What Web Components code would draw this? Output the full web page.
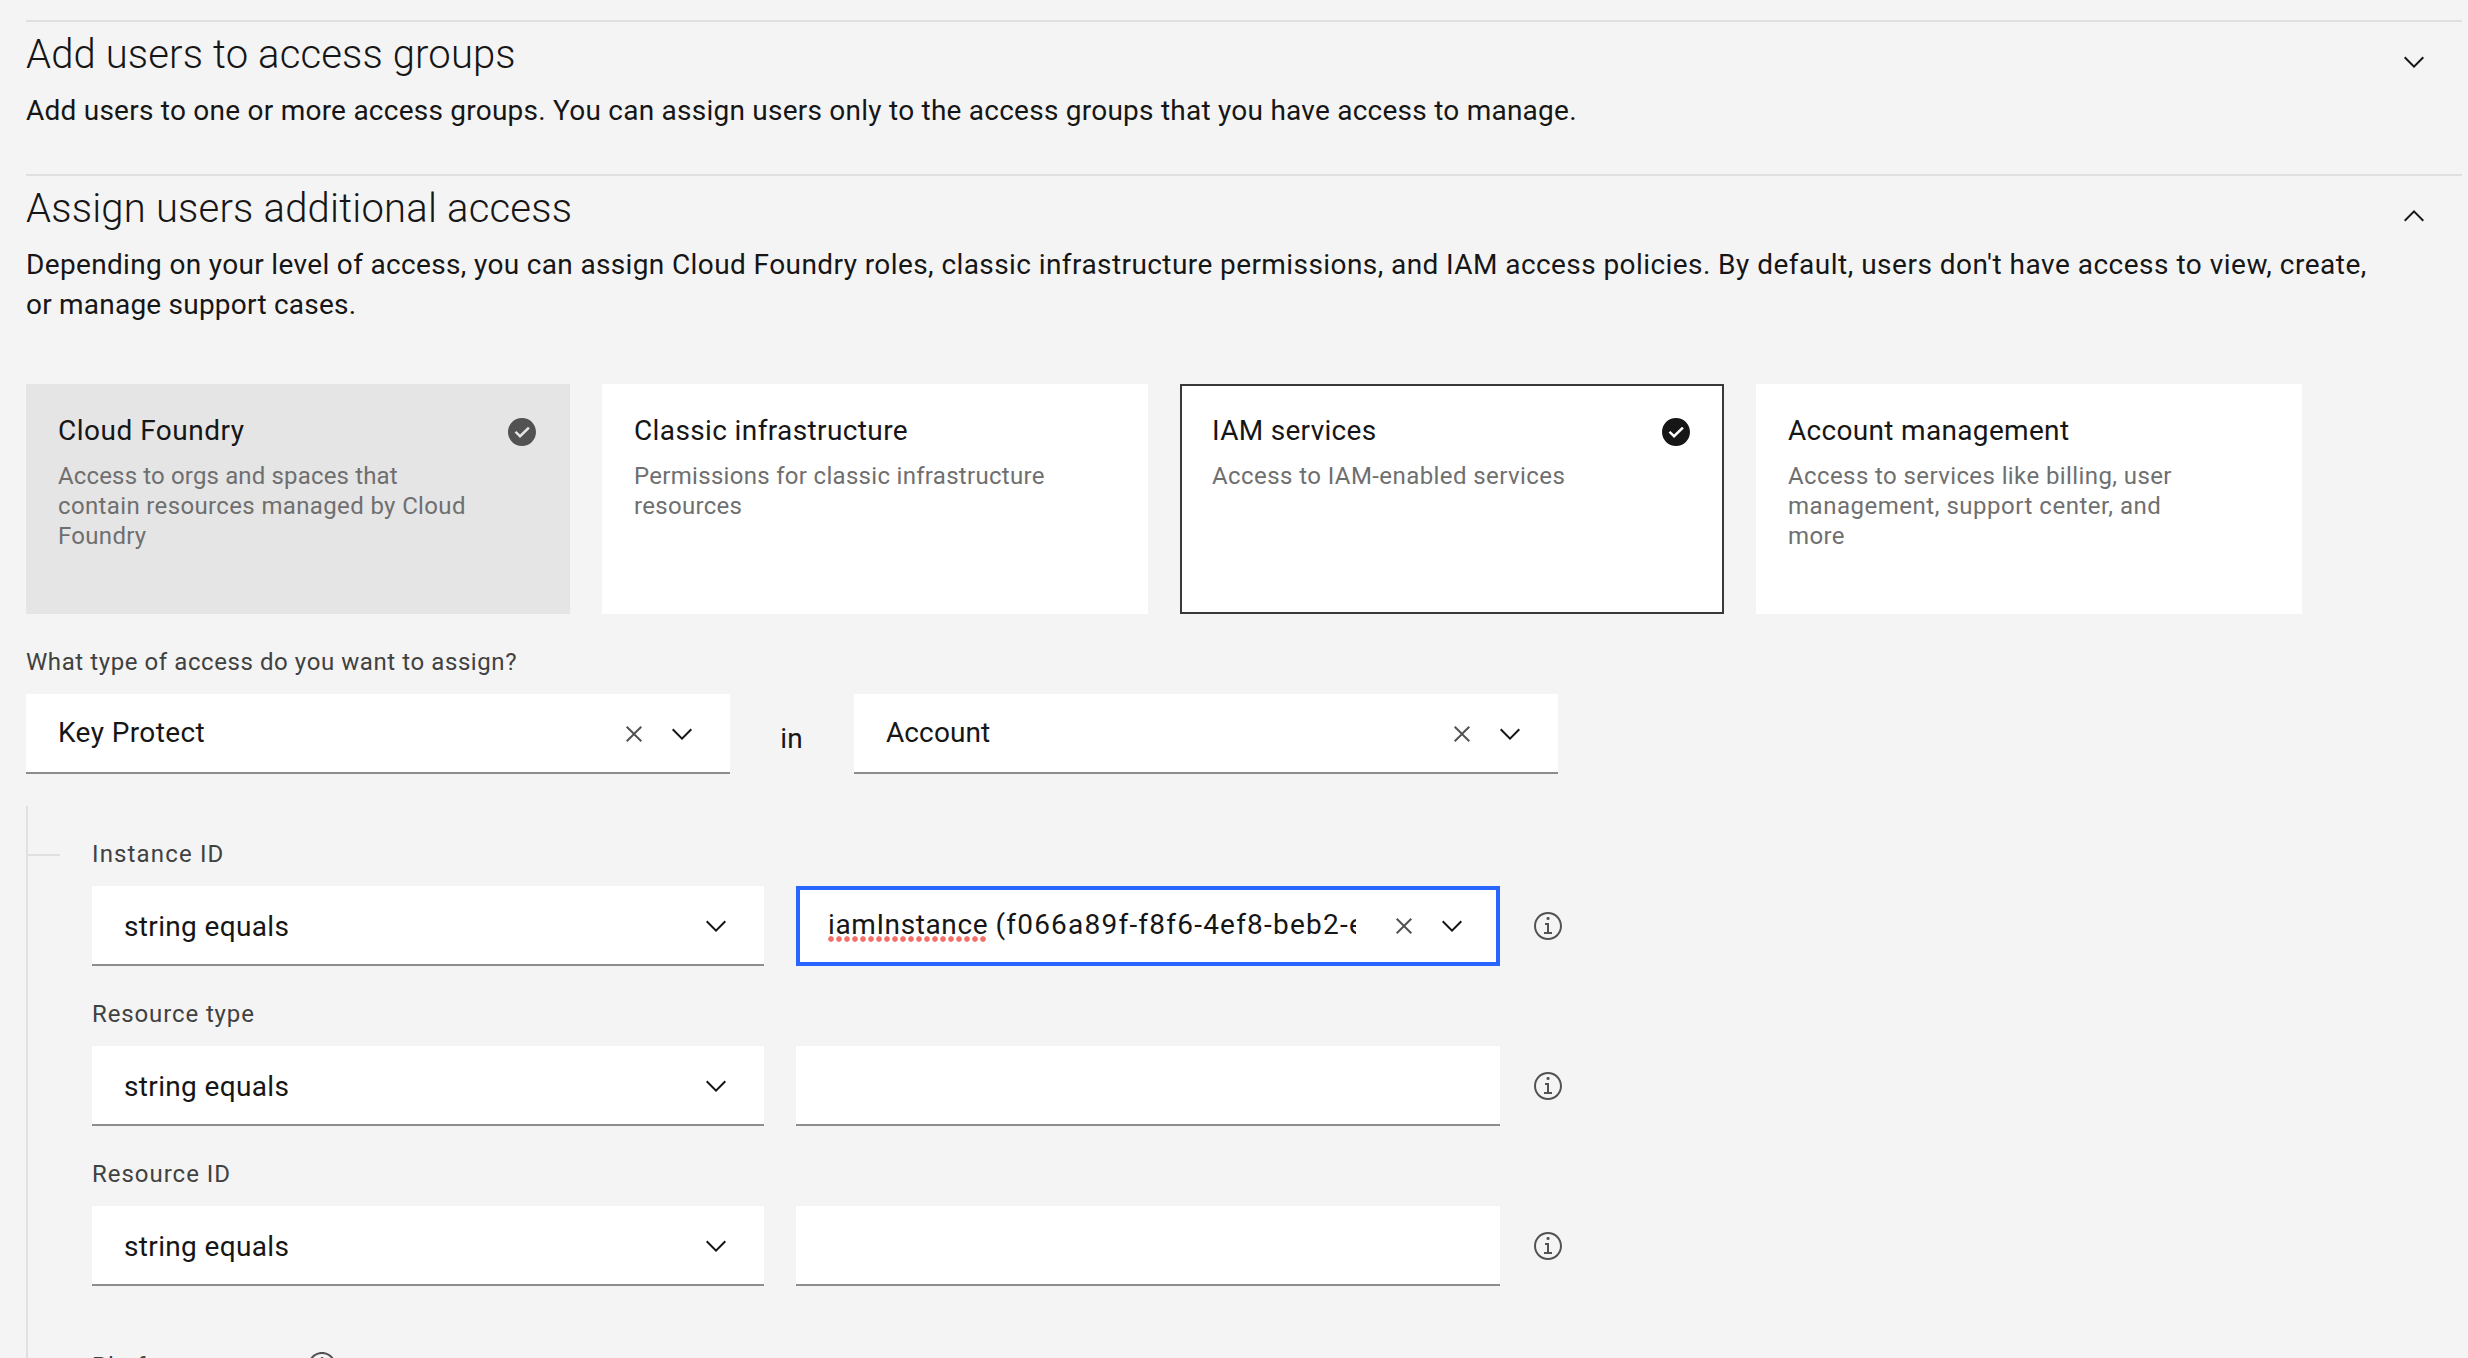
<!DOCTYPE html>
<html lang="en">
<head>
<meta charset="utf-8">
<title>Assign access</title>
<style>
html,body{margin:0;height:1358px;overflow:hidden;background:#f4f4f4}
body{font-family:Roboto,"Liberation Sans",sans-serif;font-size:28px;line-height:40px;color:#161616}
main{padding:20px 6px 0 26px}
.cards{display:grid;grid-template-columns:544px 546px 544px 546px;gap:32px;margin-top:59px}
.scope{display:flex}
.scope span{width:123px;margin-right:1px;text-align:center;padding-top:25px}
</style>
</head>
<body>
<main>
  <access-section heading="Add users to access groups" style="--hs:.14px;--ps:.24px">Add users to one or more access groups. You can assign users only to the access groups that you have access to manage.</access-section>
  <access-section open heading="Assign users additional access" style="--hs:.2px;--ps:.42px"><span style="letter-spacing:.34px">Depending on your level of access, you can assign </span>Cloud Foundry roles, classic infrastructure permissions, and IAM access policies. <span style="letter-spacing:.5px">By default, users don't have access to view, create,</span><br><span style="letter-spacing:.22px">or manage support cases.</span></access-section>
  <div class="cards">
    <access-card heading="Cloud Foundry" checked disabled style="--hs:.5px"><span style="letter-spacing:.15px">Access to orgs and spaces that</span><br><span style="letter-spacing:.36px">contain resources managed by Cloud</span><br>Foundry</access-card>
    <access-card heading="Classic infrastructure" style="--hs:.38px">Permissions for classic infrastructure<br>resources</access-card>
    <access-card heading="IAM services" checked selected style="--hs:.3px;--ds:.42px">Access to IAM-enabled services</access-card>
    <access-card heading="Account management" style="--hs:.32px;--ds:.4px">Access to services like billing, user<br><span style="letter-spacing:.52px">management, support center, and</span><br>more</access-card>
  </div>
  <field-label style="margin-top:33px;--ls:.58px">What type of access do you want to assign?</field-label>
  <div class="scope">
    <combo-box clearable style="width:704px;--ls:.4px">Key Protect</combo-box>
    <span>in</span>
    <combo-box clearable style="width:704px;--ls:.1px">Account</combo-box>
  </div>
  <attribute-list>
    <attribute-row label="Instance ID" tick style="--ls:1.15px">
      <combo-box clearable focused style="width:704px;--ls:1.22px"><spell-mark>iamInstance</spell-mark><span style="letter-spacing:.4px"> </span>(f066a89f-f8f6-4ef8-beb2-e</combo-box>
    </attribute-row>
    <attribute-row label="Resource type" style="--ls:.88px"><text-field></text-field></attribute-row>
    <attribute-row label="Resource ID" style="--ls:.98px"><text-field></text-field></attribute-row>
    <platform-heading>Platform access</platform-heading>
  </attribute-list>
</main>
<script>
const ICONS = {
  down: 'M8 11L3 6 3.7 5.3 8 9.6 12.3 5.3 13 6z',
  up: 'M8 5L13 10 12.3 10.7 8 6.4 3.7 10.7 3 10z',
  close: 'M12 4.7L11.3 4 8 7.3 4.7 4 4 4.7 7.3 8 4 11.3 4.7 12 8 8.7 11.3 12 12 11.3 8.7 8z',
  check: 'M8,1C4.1,1,1,4.1,1,8c0,3.9,3.1,7,7,7s7-3.1,7-7C15,4.1,11.9,1,8,1z M7,11L4.3,8.3l0.9-0.8L7,9.3l4-3.9l0.9,0.8L7,11z',
  info: 'M8.5 11V6.5H6.5V7.5H7.5V11H6V12H10V11zM8 3.5c-.4 0-.8.3-.8.8S7.6 5 8 5c.4 0 .8-.3.8-.8S8.4 3.5 8 3.5zM8 15c-3.9 0-7-3.1-7-7s3.1-7 7-7 7 3.1 7 7S11.9 15 8 15zM8 2C4.7 2 2 4.7 2 8s2.7 6 6 6 6-2.7 6-6S11.3 2 8 2z'
};
function define(name, render) {
  customElements.define(name, class extends HTMLElement {
    connectedCallback() {
      if (!this.shadowRoot) this.attachShadow({ mode: 'open' }).innerHTML = render(this);
    }
  });
}

define('ui-icon', el => `<style>:host{display:block;width:32px;height:32px;flex:none}svg{display:block}</style>
<svg width="32" height="32" viewBox="0 0 16 16" fill="currentColor"><path fill-rule="evenodd" d="${ICONS[el.getAttribute('name')]}"/></svg>`);

define('access-section', el => `<style>
:host{display:flex;justify-content:space-between;border-top:2px solid #e0e0e0;padding:9px 32px 43px 0}
:host([open]){padding-bottom:0}
h2{margin:0 0 12px;font-weight:300;font-size:40px;line-height:48px;letter-spacing:var(--hs)}
p{margin:0;white-space:nowrap;letter-spacing:var(--ps)}
ui-icon{margin-top:15px}
</style><div><h2>${el.getAttribute('heading')}</h2><p><slot></slot></p></div><ui-icon name="${el.hasAttribute('open') ? 'up' : 'down'}"></ui-icon>`);

define('access-card', el => `<style>
:host{display:flex;justify-content:space-between;box-sizing:border-box;height:230px;background:#fff;border:2px solid #fff;padding:25px 30px}
:host([disabled]){background:#e5e5e5;border-color:#e5e5e5}
:host([selected]){border-color:#393939}
h3{margin:0 0 10px;font-weight:400;font-size:28px;line-height:40px;letter-spacing:var(--hs)}
p{margin:0;font-size:24px;line-height:30px;color:#6f6f6f;white-space:nowrap;letter-spacing:var(--ds,.3px)}
ui-icon{margin-top:5px}
:host([disabled]) ui-icon{color:#525252}
</style><div><h3>${el.getAttribute('heading')}</h3><p><slot></slot></p></div>${el.hasAttribute('checked') ? '<ui-icon name="check"></ui-icon>' : ''}`);

define('field-label', () => `<style>:host{display:block;font-size:24px;line-height:30px;margin-bottom:17px;color:#414141;letter-spacing:var(--ls)}</style><slot></slot>`);

define('combo-box', el => `<style>
:host{display:flex;align-items:center;gap:16px;box-sizing:border-box;height:80px;background:#fff;box-shadow:inset 0 -2px #8d8d8d;padding:0 32px}
:host([focused]){box-shadow:inset 0 0 0 4px #2965ff}
div{flex:1;min-width:0;overflow:hidden;white-space:nowrap;letter-spacing:var(--ls);padding-top:2px}
:host([clearable]) div{margin-right:16px;padding:0 0 2px}
.x{color:#525252}
</style><div><slot></slot></div>${el.hasAttribute('clearable') ? '<ui-icon class="x" name="close"></ui-icon>' : ''}<ui-icon name="down"></ui-icon>`);

define('spell-mark', () => `<style>
:host{letter-spacing:.6px;padding-bottom:1px;background:radial-gradient(circle at 3px 3px,#f27068 2.4px,transparent 3.2px) left bottom/8px 6px repeat-x}
</style><slot></slot>`);

define('text-field', () => `<style>:host{display:block;width:704px;height:80px;background:#fff;box-shadow:inset 0 -2px #8d8d8d}</style>`);

define('attribute-list', () => `<style>:host{display:flex;flex-direction:column;gap:33px;margin-top:32px;padding-top:33px;border-left:2px solid #e0e0e0}</style><slot></slot>`);

define('attribute-row', el => `<style>
:host{display:block;padding-left:64px}
.head{display:flex}
:host([tick]) .head::before{content:"";width:32px;height:2px;background:#e0e0e0;margin:15px 32px 0 -64px}
.line{display:flex;align-items:center;gap:32px}
.op{width:672px;--ls:.35px}
ui-icon{color:#525252}
</style><div class="head"><field-label>${el.getAttribute('label')}</field-label></div>
<div class="line"><combo-box class="op">string equals</combo-box><slot></slot><ui-icon name="info"></ui-icon></div>`);

define('platform-heading', () => `<style>
:host{display:flex;padding-left:64px;margin-top:32px;font-size:24px;line-height:30px;color:#414141;letter-spacing:.8px}
span{width:214px}ui-icon{color:#525252;margin-top:-1px}
</style><span><slot></slot></span><ui-icon name="info"></ui-icon>`);
</script>
</body>
</html>
